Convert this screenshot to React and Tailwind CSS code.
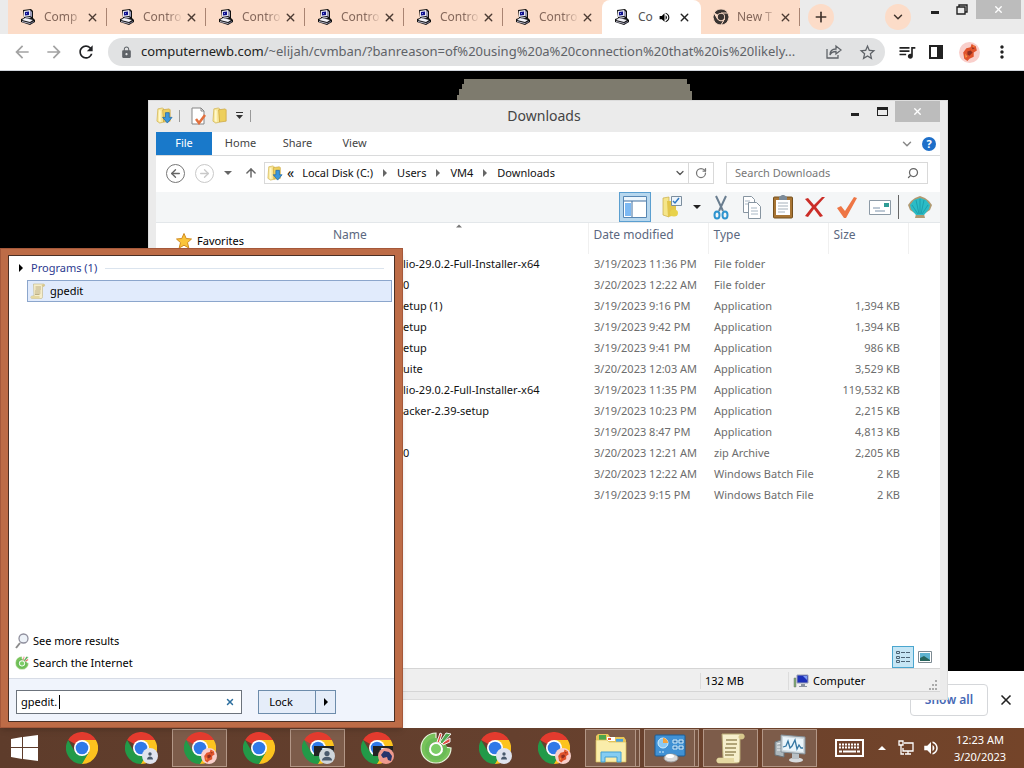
import { useId, useState } from 'react';
import { ArrowLeft, ArrowRight, ArrowUp, ChevronDown, Plus, RotateCw, Search, X } from 'lucide-react';
import { MdArrowBack, MdArrowForward, MdLock, MdMoreVert, MdQueueMusic, MdRefresh, MdStarBorder, MdVolumeUp } from 'react-icons/md';

const tabs = [
  { title: 'Comp' },
  { title: 'Contro' },
  { title: 'Contro' },
  { title: 'Contro' },
  { title: 'Contro' },
  { title: 'Contro', noLine: true },
  { title: 'Co', active: true },
  { title: 'New T', chrome: true },
];

const files = [
  { name: 'lio-29.0.2-Full-Installer-x64', date: '3/19/2023 11:36 PM', type: 'File folder', size: '' },
  { name: '0', date: '3/20/2023 12:22 AM', type: 'File folder', size: '' },
  { name: 'etup (1)', date: '3/19/2023 9:16 PM', type: 'Application', size: '1,394 KB' },
  { name: 'etup', date: '3/19/2023 9:42 PM', type: 'Application', size: '1,394 KB' },
  { name: 'etup', date: '3/19/2023 9:41 PM', type: 'Application', size: '986 KB' },
  { name: 'uite', date: '3/20/2023 12:03 AM', type: 'Application', size: '3,529 KB' },
  { name: 'lio-29.0.2-Full-Installer-x64', date: '3/19/2023 11:35 PM', type: 'Application', size: '119,532 KB' },
  { name: 'acker-2.39-setup', date: '3/19/2023 10:23 PM', type: 'Application', size: '2,215 KB' },
  { name: '', date: '3/19/2023 8:47 PM', type: 'Application', size: '4,813 KB' },
  { name: '0', date: '3/20/2023 12:21 AM', type: 'zip Archive', size: '2,205 KB' },
  { name: '', date: '3/20/2023 12:22 AM', type: 'Windows Batch File', size: '2 KB' },
  { name: '', date: '3/19/2023 9:15 PM', type: 'Windows Batch File', size: '2 KB' },
];

function PcIcon({ size = 16 }) {
  return (
    <svg width={size} height={size} viewBox="0 0 16 16" className="shrink-0">
      <path d="M3 1l8-1 2 2v7l2 2v2l-5 3-9-3v-3l3-1z" fill="#111" />
      <path d="M4 2l6-1v6L4 8z" fill="#e4e4ee" />
      <path d="M10 1l2 2v5l-2-1z" fill="#9a9ab8" />
      <path d="M5 3l4-.6v3.6L5 6.600z" fill="#10108c" />
      <path d="M6 4h1v1H6z" fill="#7a90f0" />
      <path d="M2 11l3-2 8 2-3 2z" fill="#f2f2fa" />
      <path d="M2 12l8 2v1l-8-2z" fill="#b8b8cc" />
      <path d="M10 14l4-2v1l-4 2z" fill="#77778f" />
      <path d="M5 8.600l5-.6 1 1-4 .5z" fill="#c6c6d8" />
    </svg>
  );
}

function ChromeLogo({ size = 32, className = '', mono = false }) {
  const red = mono ? '#3a3432' : '#e33b2e';
  const yellow = mono ? '#3a3432' : '#fcc31e';
  const green = mono ? '#3a3432' : '#229a48';
  const gap = mono ? '#fcdcc8' : 'none';
  return (
    <svg width={size} height={size} viewBox="0 0 48 48" className={className}>
      <path d="M24 24L3.200 12A24 24 0 0 1 44.800 12z" fill={red} stroke={gap} strokeWidth="3" />
      <path d="M24 24V12h20.800A24 24 0 0 1 24 48l-1 0 11.400-18z" fill={yellow} stroke={gap} strokeWidth="3" />
      <path d="M3.200 12l10.400 18 10.400 6 10.400-6L24 48A24 24 0 0 1 3.200 12z" fill={green} stroke={gap} strokeWidth="3" />
      <circle cx="24" cy="24" r="12" fill={mono ? '#fcdcc8' : '#fff'} />
      <circle cx="24" cy="24" r="9.500" fill={mono ? '#3a3432' : '#3079e8'} />
    </svg>
  );
}

function Phoenix({ size = 20 }) {
  return (
    <svg width={size} height={size} viewBox="0 0 20 20">
      <circle cx="10" cy="10" r="10" fill="#f9cfcb" />
      <path d="M5 16l-1-6 3-4 4-1 1-3 4 2 1 4-3 2v4l-4 2-2 2z" fill="#e0532c" />
      <path d="M8 9l3-1 2 2-3 3-2-1zM12 5l3 1-2 1z" fill="#8f2f20" />
      <path d="M6 11l2 3-2 1zM13 4l1-1 1 2z" fill="#f59743" />
    </svg>
  );
}

function PersonBadge({ size = 16, dark }) {
  return (
    <svg width={size} height={size} viewBox="0 0 16 16">
      <circle cx="8" cy="8" r="8" fill={dark ? '#cfd5da' : '#dfe3ee'} />
      <circle cx="8" cy={dark ? '5.500' : '6'} r={dark ? '2.600' : '1.700'} fill="#4a5a6c" />
      <path d={dark ? 'M3 12.500c0-5 10-5 10 0z' : 'M5 11.500c0-4 6-4 6 0z'} fill="#4a5a6c" />
    </svg>
  );
}

function HorseBadge() {
  return (
    <svg width="16" height="16" viewBox="0 0 16 16">
      <circle cx="8" cy="8" r="8" fill="#ee9a8e" />
      <path d="M3 7l3-4 5 1 3 4-1 5-3-1-1-3-4 1z" fill="#26356b" />
    </svg>
  );
}

function Folder({ size = 18, arrow }) {
  return (
    <svg width={size} height={size} viewBox="0 0 18 18" className="shrink-0">
      <path d="M2 2l5-1 1 1v14l-4 1-3-2z" fill="#f8e79a" stroke="#cfae45" strokeWidth=".7" />
      <path d="M7 3l7-1 1 1v12l-7 1z" fill="#edcf5c" stroke="#c8a139" strokeWidth=".7" />
      <path d="M3 3l2 1v12l-2-1z" fill="#fff8cc" />
      {arrow && <path d="M10 6h4v5h3l-5 6-5-6h3z" fill="#3b97dc" stroke="#1f68a8" strokeWidth=".8" />}
    </svg>
  );
}

function DocCheck() {
  return (
    <svg width="17" height="18" viewBox="0 0 17 18">
      <path d="M2 1h9l3 3v13H2z" fill="#fff" stroke="#858585" />
      <path d="M11 1v3h3" fill="none" stroke="#858585" />
      <path d="M6 12l3 4 6-8" fill="none" stroke="#e36f3c" strokeWidth="2.500" />
    </svg>
  );
}

function Triangle({ className = '', dir = 'down', size = 8 }) {
  const d = { down: 'M0 2h8l-4 4z', right: 'M2 0v8l4-4z', up: 'M0 6h8l-4-4z' }[dir];
  return (
    <svg width={size} height={size} viewBox="0 0 8 8" className={className} fill="currentColor">
      <path d={d} />
    </svg>
  );
}

function ScrollIcon({ size = 18 }) {
  return (
    <svg width={size} height={size} viewBox="0 0 30 32" className="shrink-0">
      <path d="M6 2h20c3 0 3 5 0 5h-2v20c0 3-1 4-3 4H3c-3 0-3-5 0-5h4z" fill="#f6eecb" stroke="#b7a873" />
      <path d="M24 3c-2 0-2 4 0 4h2c3 0 3-5 0-5z" fill="#d8c88c" />
      <path d="M3 26h15c0 3 0 5 3 5H3c-3 0-3-5 0-5z" fill="#e5d8a2" />
      <path d="M10 8h11M10 12h11M9 16h11M9 20h11M9 23h9" stroke="#9a8c5e" strokeWidth="1.300" />
    </svg>
  );
}

function CocCoc({ size = 32 }) {
  return (
    <svg width={size} height={size} viewBox="0 0 32 32" className="shrink-0">
      <path d="M16 1A15 15 0 1 0 31 16l-7-1a8 8 0 1 1-8-8z" fill="#78c35b" stroke="#e9f6df" strokeWidth="1.200" />
      <circle cx="16" cy="17" r="9" fill="none" stroke="#6abb57" strokeWidth="4" />
      <circle cx="16" cy="17" r="6" fill="#7ccd67" stroke="#fff" strokeWidth="2" />
      <path d="M17 10l3-9 2 1-3 9zM22 11l8-5v4l-7 3z" fill="#e04c45" stroke="#fff" strokeWidth=".9" />
      <path d="M20 10l6-9 5 1-9 10z" fill="#4fa950" stroke="#fff" strokeWidth=".9" />
    </svg>
  );
}

function ExplorerIcon() {
  return (
    <svg width="34" height="32" viewBox="0 0 34 32">
      <path d="M2 4l2-2h10l2 3h14l2 3v22H2z" fill="#e6c65a" />
      <path d="M5 3h7v5H5z" fill="#4ca64b" />
      <path d="M13 5h8v4h-8z" fill="#fff" />
      <path d="M14 6h3v2h-3z" fill="#e25b39" />
      <path d="M22 7h7v3h-7z" fill="#4aa3df" />
      <path d="M2 8h11l2 2h17v20H2z" fill="#faedaa" stroke="#d9bd59" strokeWidth=".7" />
      <path d="M7 20h20v10h-4v-5H11v5H7z" fill="#85cdf2" stroke="#459fd2" />
    </svg>
  );
}

function ControlPanelIcon() {
  return (
    <svg width="34" height="32" viewBox="0 0 34 32">
      <rect x="2" y="3" width="30" height="21" rx="1" fill="#4091d4" stroke="#1b5c96" />
      <circle cx="10" cy="11" r="5" fill="#8cc9f2" stroke="#d6effd" />
      <path d="M10 11V6a5 5 0 0 1 5 5z" fill="#f3a33d" />
      <path d="M20 8h4v3h-4zM26 8h4v3h-4zM20 14h4v3h-4zM26 14h4v3h-4z" fill="#2c75b5" stroke="#d6effd" />
      <path d="M6 20h6" stroke="#d6effd" strokeDasharray="2 1" />
      <ellipse cx="18" cy="26" rx="7" ry="4" fill="#d9d9d9" stroke="#999" />
      <ellipse cx="17" cy="24" rx="4" ry="2" fill="#fff" />
    </svg>
  );
}

function MonitorIcon() {
  return (
    <svg width="32" height="30" viewBox="0 0 32 30">
      <path d="M1 9l9-3v18l-9-2z" fill="#aeb8bd" stroke="#69757c" />
      <path d="M3 11l4-1M3 14h4M3 17h4" stroke="#eef2f4" />
      <ellipse cx="22" cy="27" rx="7" ry="2.500" fill="#d7dadd" />
      <path d="M18 20h7v6h-7z" fill="#b9c0c5" />
      <path d="M7 2l24 2v17L7 19z" fill="#cfd8dd" stroke="#84919a" />
      <path d="M9 4l20 2v13L9 17z" fill="#eaf5fb" />
      <path d="M9 14l3-1 2-5 2 7 2-2 3-6 2 9 2-4 2 3h2" fill="none" stroke="#3477a3" strokeWidth="1.300" />
    </svg>
  );
}

// Chrome tab strip and toolbar

function BrowserTab({ tab }) {
  const [closed, setClosed] = useState(false);
  if (closed) return null;

  if (tab.active) {
    return (
      <div className="h-full w-[99px] bg-[#fcdcc8]">
        <div className="flex h-full items-center rounded-t-lg bg-white pr-[10px] pl-3">
          <PcIcon />
          <span className="ml-2 w-4 text-xs whitespace-nowrap text-[#555]">{tab.title}</span>
          <MdVolumeUp size={13} className="ml-1 shrink-0 text-black" />
          <button aria-label="Close tab" onClick={() => setClosed(true)} className="ml-auto text-[#222]">
            <X size={13} strokeWidth={2.5} />
          </button>
        </div>
      </div>
    );
  }

  return (
    <div className="h-full w-[99px] bg-[#fcdcc8] py-2">
      <div className={`flex h-full items-center pl-3 ${tab.noLine ? '' : 'border-r border-[#a98472]'}`}>
        {tab.chrome ? <ChromeLogo size={16} mono className="shrink-0" /> : <PcIcon />}
        <span className="mr-[2px] ml-2 w-10 mask-r-from-60% text-xs whitespace-nowrap text-[#85685b]">{tab.title}</span>
        <button aria-label="Close tab" onClick={() => setClosed(true)} className="shrink-0 text-[#4b3a32]">
          <X size={13} strokeWidth={2.5} />
        </button>
      </div>
    </div>
  );
}

function BrowserHeader() {
  return (
    <header>
      <div className="flex h-[34px] items-center bg-[#ebebeb] pl-2">
        {tabs.map((tab, i) => (
          <BrowserTab key={i} tab={tab} />
        ))}
        <button aria-label="New tab" className="ml-2 flex size-[26px] items-center justify-center rounded-full bg-[#fcdcc8] text-[#40332c]">
          <Plus size={16} strokeWidth={2.5} />
        </button>
        <div className="ml-auto flex h-full items-start">
          <button aria-label="Search tabs" className="mt-1 mr-5 flex size-[26px] items-center justify-center rounded-full bg-[#fcdcc8] text-[#40332c]">
            <ChevronDown size={14} strokeWidth={2.5} />
          </button>
          <button aria-label="Minimize" className="mt-[11px] mr-[17px] h-[3px] w-2 bg-[#222]" />
          <button aria-label="Restore" className="mt-1 mr-2 text-[#222]">
            <svg width="12" height="11" viewBox="0 0 12 11" fill="none" stroke="currentColor" strokeWidth="1.400">
              <path d="M3 3V1h8v7H9M1 3h8v7H1z" />
            </svg>
          </button>
          <button aria-label="Close" className="mr-[3px] flex h-[19px] w-[45px] items-center justify-center bg-[#bcbcbc] text-white">
            <X size={11} strokeWidth={3} />
          </button>
        </div>
      </div>

      <div className="flex h-[37px] items-center border-b border-gray-300 bg-white pr-3 pl-3 text-[#5f6368]">
        <button aria-label="Back" className="mr-3 text-[#a3a3a3]"><MdArrowBack size={20} /></button>
        <button aria-label="Forward" className="mr-3 text-[#a3a3a3]"><MdArrowForward size={20} /></button>
        <button aria-label="Reload" className="mr-3 text-[#202124]"><MdRefresh size={20} /></button>
        <div className="flex h-7 min-w-0 flex-1 items-center rounded-full bg-[#e1e2e3] pr-2 pl-3">
          <MdLock size={13} className="mr-2 shrink-0" />
          <p className="min-w-0 flex-1 text-[13px] whitespace-nowrap">
            <span className="text-[#222]">computernewb.com</span>
            /~elijah/cvmban/?banreason=of%20using%20a%20connection%20that%20is%20likely...
          </p>
          <button aria-label="Share" className="mr-4 ml-2">
            <svg width="16" height="16" viewBox="0 0 16 16" fill="none" stroke="currentColor" strokeWidth="1.300">
              <path d="M1 5v9h11v-3M4 11c0-4 2-6 6-6V2l5 4-5 4V7.500C7 7.500 5 8.500 4 11z" />
            </svg>
          </button>
          <button aria-label="Bookmark"><MdStarBorder size={19} /></button>
        </div>
        <button aria-label="Media controls" className="ml-3 text-[#222]"><MdQueueMusic size={20} /></button>
        <button aria-label="Side panel" className="ml-3 h-[14px] w-[14px] border-2 border-r-[6px] border-[#222]" />
        <button aria-label="Profile" className="ml-4"><Phoenix size={21} /></button>
        <button aria-label="Menu" className="ml-3 text-[#222]"><MdMoreVert size={20} /></button>
      </div>
    </header>
  );
}

// File Explorer

function TitleBar() {
  return (
    <div className="grid h-[31px] grid-cols-3 items-center">
      <div className="flex items-center pb-[2px]">
        <Folder size={17} arrow />
        <span className="mx-[6px] h-3 w-px bg-[#999]" />
        <span className="mr-[5px] ml-1"><DocCheck /></span>
        <Folder size={17} />
        <svg width="9" height="9" viewBox="0 0 9 9" className="mx-[6px]"><path d="M1 1h7v1H1zM1 4h7L4.500 8z" fill="#333" /></svg>
        <span className="h-3 w-px bg-[#999]" />
      </div>
      <h1 className="pr-2 pb-[2px] text-center text-sm text-[#444]">Downloads</h1>
      <div className="flex h-full items-start justify-end">
        <button aria-label="Minimize window" className="mt-3 mr-[18px] h-[3px] w-2 bg-[#222]" />
        <button aria-label="Maximize window" className="mt-[6px] mr-[7px] h-[9px] w-[11px] border border-t-[3px] border-[#222]" />
        <button aria-label="Close window" className="flex h-[21px] w-[45px] items-center justify-center bg-[#bcbcbc] text-white">
          <X size={11} strokeWidth={3} />
        </button>
      </div>
    </div>
  );
}

function Ribbon() {
  return (
    <nav className="flex h-6 items-center border-b border-[#dadbdc] bg-white text-[11px] text-[#444]">
      <button className="h-full w-14 bg-[#1979ca] text-white">File</button>
      <button className="h-full w-[57px]">Home</button>
      <button className="h-full w-[57px]">Share</button>
      <button className="h-full w-[57px]">View</button>
      <div className="ml-auto flex items-center gap-2 pr-1">
        <button aria-label="Expand ribbon" className="text-[#888]"><ChevronDown size={14} strokeWidth={2.5} /></button>
        <button aria-label="Help" className="size-[14px] rounded-full bg-[#1e6fc9] text-[11px] leading-[14px] font-bold text-white">?</button>
      </div>
    </nav>
  );
}

function AddressRow() {
  const parts = ['Local Disk (C:)', 'Users', 'VM4', 'Downloads'];
  return (
    <div className="flex h-9 items-center bg-white pr-3 pb-[2px] pl-[10px]">
      <button aria-label="Back to previous folder" className="flex size-[19px] items-center justify-center rounded-full border border-[#777] text-[#666]">
        <ArrowLeft size={13} strokeWidth={2.5} />
      </button>
      <button aria-label="Forward to next folder" className="ml-[10px] flex size-[19px] items-center justify-center rounded-full border border-[#c9c9c9] text-[#c9c9c9]">
        <ArrowRight size={13} strokeWidth={2.5} />
      </button>
      <button aria-label="Recent locations" className="ml-[10px] text-[#666]"><Triangle size={8} /></button>
      <button aria-label="Up" className="ml-3 text-[#666]"><ArrowUp size={14} strokeWidth={2.5} /></button>
      <div className="ml-[6px] flex h-[22px] flex-1 items-center border border-[#d9d9d9] pl-[2px] text-[11px] text-[#111]">
        <Folder size={16} arrow />
        <span className="mr-2 ml-1 text-sm">«</span>
        {parts.map((part, i) => (
          <span key={part} className="flex items-center">
            <button className="whitespace-nowrap">{part}</button>
            {i < parts.length - 1 && <Triangle dir="right" size={8} className="mx-2 text-[#666]" />}
          </span>
        ))}
        <button aria-label="Previous locations" className="mr-[2px] ml-auto text-[#555]"><ChevronDown size={12} strokeWidth={2.5} /></button>
        <button aria-label="Refresh" className="flex h-full w-[25px] items-center justify-center border-l border-[#d9d9d9] text-[#777]">
          <RotateCw size={12} strokeWidth={2.5} />
        </button>
      </div>
      <label className="ml-3 flex h-[22px] w-[202px] items-center border border-[#d9d9d9] px-2">
        <input
          type="text"
          aria-label="Search Downloads"
          placeholder="Search Downloads"
          className="min-w-0 flex-1 text-[11px] outline-none placeholder:text-[#777]"
        />
        <Search size={12} strokeWidth={2.5} className="-scale-x-100 text-[#666]" />
      </label>
    </div>
  );
}

function CommandBar() {
  return (
    <div className="flex h-[31px] items-center justify-end border-b border-[#e3e7ea] bg-[#f4f6f7] pr-2">
      <button aria-label="Navigation pane" className="flex h-[30px] w-8 items-center justify-center border border-[#5b9fd0] bg-[#b7d7ee]">
        <svg width="24" height="22" viewBox="0 0 24 22">
          <path d="M.5.500h23v21H.5z" fill="#fff" stroke="#5887b3" />
          <path d="M1 1h22v4H1z" fill="#eef6fc" />
          <path d="M2 7h6v13H2z" fill="#7db9f3" />
          <path d="M1 5h22M9 5v16" stroke="#3f6fa0" />
        </svg>
      </button>
      <button aria-label="Select" className="ml-[10px]">
        <svg width="22" height="24" viewBox="0 0 22 24">
          <path d="M2 3l6-1v20l-6-2z" fill="#f5e58a" stroke="#c9ad49" strokeWidth=".7" />
          <path d="M6 6h9v14l-8 2z" fill="#e3c64b" />
          <ellipse cx="13" cy="18" rx="4" ry="3.500" fill="#e8d24b" />
          <path d="M10.500 1.500h10v9h-10z" fill="#eef5fb" stroke="#7c8e9e" />
          <path d="M12 6l2 2 4-5" fill="none" stroke="#2f77c1" strokeWidth="1.500" />
        </svg>
      </button>
      <button aria-label="Select options" className="ml-[10px] text-[#222]"><Triangle size={8} /></button>
      <button aria-label="Cut" className="ml-3">
        <svg width="16" height="25" viewBox="0 0 16 25" fill="none">
          <path d="M3 1l7 15M13 1L6 16" stroke="#6a7e90" strokeWidth="2" />
          <ellipse cx="4" cy="20" rx="2.500" ry="3.500" stroke="#2e94cf" strokeWidth="2" />
          <ellipse cx="12" cy="20" rx="2.500" ry="3.500" stroke="#2e94cf" strokeWidth="2" />
        </svg>
      </button>
      <button aria-label="Copy" className="ml-[14px]">
        <svg width="18" height="23" viewBox="0 0 18 23" fill="#fff" stroke="#8795a1">
          <path d="M.5.500h8l3 3v13H.5z" />
          <path d="M5.500 6.500h8l4 4v12h-12z" />
          <path d="M2 5h5M2 8h3M8 12h6M8 15h7M8 18h7" stroke="#a8b7c4" />
        </svg>
      </button>
      <button aria-label="Paste" className="ml-3">
        <svg width="20" height="24" viewBox="0 0 20 24">
          <rect x=".5" y="2" width="19" height="21" rx="1" fill="#a87534" stroke="#74501f" />
          <path d="M3 5h14v15H3z" fill="#fff" />
          <path d="M5 8h10M5 11h10M5 14h10M5 17h7" stroke="#a6b1bb" />
          <path d="M6 2l3-2h2l3 2v3H6z" fill="#7c8b99" />
        </svg>
      </button>
      <button aria-label="Delete" className="ml-3">
        <svg width="20" height="21" viewBox="0 0 20 21" fill="#cb2d27">
          <path d="M0 2l3-1 6 7 8-8 3 0-9 10 7 9-3 1-6-8-6 8-3-1 7-9z" />
        </svg>
      </button>
      <button aria-label="Properties" className="ml-3">
        <svg width="20" height="22" viewBox="0 0 20 22" fill="#ee7645">
          <path d="M0 12l4-2 4 5 9-14 3 1L9 22H7z" />
        </svg>
      </button>
      <button aria-label="Rename" className="ml-3">
        <svg width="22" height="15" viewBox="0 0 22 15">
          <path d="M.5.500h21v14H.5z" fill="#fff" stroke="#8c9aa6" />
          <path d="M15 3h5v4h-5z" fill="#2f9c95" />
          <path d="M4 8h7M6 11h10" stroke="#7d93ab" />
        </svg>
      </button>
      <span className="ml-[7px] h-6 w-px bg-[#666]" />
      <button aria-label="Shell" className="ml-[9px]">
        <svg width="24" height="22" viewBox="0 0 24 22">
          <path d="M7 22l1-4-6-4-2-5 3-4 4-3 5-2 5 2 4 3 3 4-2 5-6 4 1 4z" fill="#b09a72" />
          <path d="M8 19l-5-6-1-4 4-5 6-2 6 2 4 5-1 4-5 6z" fill="#2bbcc6" />
          <path d="M10 18L4 9M11 18L8 4M12 18V3M13 18l3-14M14 18l6-9" stroke="#1594a2" strokeWidth=".7" />
        </svg>
      </button>
    </div>
  );
}

function FileTable() {
  return (
    <table className="w-full table-fixed border-collapse text-[11px] text-[#6d6d6d]">
      <thead>
        <tr className="h-[31px] text-left align-top text-xs text-[#5b6880]">
          <th className="relative pt-1 pl-2 font-normal">
            Name
            <Triangle dir="up" size={6} className="absolute top-0 left-1/2 text-[#777]" />
          </th>
          <th className="w-[120px] border-l border-[#f0f0f0] pt-1 pl-[5px] font-normal">Date modified</th>
          <th className="w-[120px] border-l border-[#f0f0f0] pt-1 pl-[5px] font-normal">Type</th>
          <th className="w-20 border-x border-[#f0f0f0] pt-1 pl-[5px] font-normal">Size</th>
          <th className="w-8" />
        </tr>
      </thead>
      <tbody>
        {files.map((file, i) => (
          <tr key={i} className="h-[21px] whitespace-nowrap">
            <td className="pl-[78px] text-[#111]">{file.name}</td>
            <td className="pl-[6px]">{file.date}</td>
            <td className="pl-[6px]">{file.type}</td>
            <td className="pr-2 text-right">{file.size}</td>
            <td />
          </tr>
        ))}
      </tbody>
    </table>
  );
}

function Explorer() {
  return (
    <section className="absolute top-[29px] left-[148px] flex h-[600px] w-[800px] flex-col border border-[#dcdcdc] bg-[#ebebeb] px-[7px] pb-[7px]">
      <TitleBar />
      <Ribbon />
      <AddressRow />
      <CommandBar />
      <div className="flex min-h-0 flex-1 bg-white">
        <aside className="w-[169px] pt-[10px] pl-5 text-[11px] text-black">
          <button className="flex items-center gap-[5px]">
            <svg width="16" height="16" viewBox="0 0 16 16">
              <path d="M8 .5l2.200 5 5.300.500-4 3.600 1.300 5.400L8 12.200 3.200 15l1.300-5.400L.5 6l5.300-.5z" fill="#fac43a" stroke="#d08a20" />
            </svg>
            Favorites
          </button>
        </aside>
        <div className="flex min-w-0 flex-1 flex-col justify-between">
          <FileTable />
          <div className="flex items-center justify-end gap-1 pr-2">
            <button aria-label="Details view" className="flex size-[22px] items-center justify-center border border-[#4aa6cf] bg-[#c6e6f5]">
              <svg width="16" height="14" viewBox="0 0 16 14" fill="none" stroke="#4c6475">
                <path d="M1.500 1.500h3v2h-3zM1.500 6.500h3v2h-3zM1.500 10.500h3v2h-3z" />
                <path d="M6 2.500h9M6 7.500h9M6 11.500h9" strokeDasharray="4 1" />
              </svg>
            </button>
            <button aria-label="Thumbnail view">
              <svg width="14" height="12" viewBox="0 0 14 12">
                <path d="M.5.500h13v11H.5z" fill="#fff" stroke="#7d8a92" />
                <path d="M2 2h10v8H2z" fill="#5fb3cf" />
                <path d="M2 7l4-2 6 4v1H2z" fill="#27655c" />
              </svg>
            </button>
          </div>
        </div>
      </div>
      <footer className="flex h-6 items-center justify-end border-y border-[#d5d5d5] bg-[#efefef] pt-[2px] text-[11px] text-black">
        <span className="w-[88px] border-l border-[#dcdcdc] pl-1">132 MB</span>
        <span className="flex w-[152px] items-center gap-1 border-l border-[#dcdcdc] pl-1">
          <svg width="16" height="14" viewBox="0 0 16 14">
            <path d="M1 4h2v9H1z" fill="#7fae72" stroke="#777" strokeWidth=".5" />
            <path d="M4 1h11v8H4z" fill="#1c2fb8" stroke="#9aa0b4" />
            <path d="M10 2h4v4z" fill="#7d9bf5" />
            <path d="M8 10h4v2h2v1H6v-1h2z" fill="#8b93a0" />
          </svg>
          Computer
          <svg width="10" height="10" viewBox="0 0 10 10" className="mt-2 mr-[2px] ml-auto" fill="#aaa">
            <path d="M7 0h2v2H7zM7 4h2v2H7zM4 4h2v2H4zM7 8h2v2H7zM4 8h2v2H4zM1 8h2v2H1z" />
          </svg>
        </span>
      </footer>
    </section>
  );
}

// Start menu search results

function StartMenu() {
  const [query, setQuery] = useState('gpedit.');
  const searchId = useId();
  return (
    <section className="absolute bottom-0 left-0 flex h-[480px] w-[403px] flex-col border border-[#a5583a] bg-[#bd6c47] px-[7px] pt-[6px] pb-[5px] shadow-md">
      <div className="flex min-h-0 flex-1 flex-col border border-[#4a2f24] bg-white text-[11px] text-black">
        <div className="flex-1 px-[2px] pt-[2px]">
          <div className="flex h-5 items-center pr-2 pl-[6px] text-[#2b3990]">
            <Triangle dir="right" size={8} className="mr-[6px] text-black" />
            Programs (1)
            <span className="ml-2 h-px flex-1 bg-[#dbe4ee]" />
          </div>
          <button className="mt-[2px] ml-4 flex h-[22px] w-[365px] items-center gap-1 border border-[#8ca6cc] bg-[#e1ebfc] pl-[2px]">
            <ScrollIcon size={16} />
            gpedit
          </button>
        </div>
        <div className="flex flex-col items-start border-b border-[#d7dce6] pb-1 pl-[6px]">
          <button className="flex h-[22px] items-center gap-1">
            <svg width="14" height="16" viewBox="0 0 14 16" fill="none">
              <path d="M1 15l4-5" stroke="#8b8b8b" strokeWidth="2" />
              <circle cx="8.500" cy="5.500" r="4.500" fill="#edf2f8" stroke="#8f8f9d" strokeWidth="1.300" />
            </svg>
            See more results
          </button>
          <button className="flex h-[22px] items-center gap-1">
            <CocCoc size={14} />
            Search the Internet
          </button>
        </div>
        <div className="flex h-[42px] items-center bg-[#f0f4fc] pt-1 pl-[7px]">
          <div className="relative flex h-6 w-[226px] items-center border border-[#6c737c] bg-white pr-[6px] pl-1">
            <label htmlFor={searchId} className="sr-only">Search programs and files</label>
            <input
              id={searchId}
              type="text"
              value={query}
              onChange={(e) => setQuery(e.target.value)}
              className="min-w-0 flex-1 outline-none"
            />
            <span className="absolute left-[42px] h-[14px] w-px bg-black" />
            <button aria-label="Clear" onClick={() => setQuery('')} className="text-[#2c6e9e]"><X size={10} strokeWidth={3.5} /></button>
          </div>
          <div className="ml-4 flex h-6 border border-[#6d8cab] bg-[#e5edf9]">
            <button className="w-14 pr-3">Lock</button>
            <button aria-label="Power options" className="flex w-5 items-center justify-center border-l border-[#6d8cab]">
              <Triangle dir="right" size={8} />
            </button>
          </div>
        </div>
      </div>
    </section>
  );
}

// Taskbar

function ChromeTask({ badge, mail }) {
  return (
    <span className="relative">
      <ChromeLogo size={32} />
      {mail && <span className="absolute top-[14px] left-3 h-[10px] w-5 bg-[#222] pl-[2px] text-[9px] leading-[10px] font-bold text-white">B</span>}
      {badge && <span className="absolute -right-px bottom-0">{badge}</span>}
    </span>
  );
}

const tasks = [
  { label: 'Chrome', icon: <ChromeTask /> },
  { label: 'Chrome guest', icon: <ChromeTask badge={<PersonBadge />} /> },
  { label: 'Chrome phoenix', icon: <ChromeTask badge={<Phoenix size={16} />} />, open: true },
  { label: 'Chrome window', icon: <ChromeTask /> },
  { label: 'Chrome profile', icon: <ChromeTask mail badge={<PersonBadge dark />} />, open: true },
  { label: 'Chrome horse', icon: <ChromeTask mail badge={<HorseBadge />} /> },
  { label: 'Coc Coc', icon: <CocCoc size={32} /> },
  { label: 'Chrome person', icon: <ChromeTask badge={<PersonBadge />} /> },
  { label: 'Chrome bird', icon: <ChromeTask badge={<Phoenix size={16} />} /> },
  { label: 'File Explorer', icon: <ExplorerIcon />, open: true, stacked: true },
  { label: 'Control Panel', icon: <ControlPanelIcon />, open: true, stacked: true },
  { label: 'Script', icon: <ScrollIcon size={32} />, open: true },
  { label: 'Task Manager', icon: <MonitorIcon />, open: true },
];

function Taskbar() {
  return (
    <footer className="flex h-10 items-center bg-linear-to-r from-[#5e3c2b] via-[#65402e] to-[#744429] text-white">
      <button aria-label="Start" className="mr-[6px] ml-[11px]">
        <svg width="27" height="26" viewBox="0 0 27 26" fill="#fff">
          <path d="M0 4l11-2v10H0zM12 2l15-2v12H12zM0 13h11v11L0 22zM12 13h15v13l-15-2z" />
        </svg>
      </button>
      <div className="flex h-full items-center gap-1 py-px pl-[10px]">
        {tasks.map((task) => (
          <button
            key={task.label}
            aria-label={task.label}
            className={`flex h-full w-[55px] ${task.open && !task.stacked ? 'border border-[#b39787] bg-[#7d5c4a]' : ''}`}
          >
            <span
              className={`flex h-full flex-1 items-center justify-center ${task.stacked ? 'border border-[#b39787] bg-[#7d5c4a]' : ''}`}
            >
              {task.icon}
            </span>
            {task.stacked && <span className="h-full w-1 border-y border-r border-[#b39787] bg-[#73513f]" />}
          </button>
        ))}
      </div>
      <div className="ml-auto flex items-center">
        <button aria-label="Touch keyboard">
          <svg width="29" height="18" viewBox="0 0 29 18">
            <path d="M1 1h27v16H1z" fill="none" stroke="#fff" strokeWidth="2" />
            <path d="M4 5.500h21M4 8.500h21" stroke="#fff" strokeWidth="2" strokeDasharray="2 1" />
            <path d="M4 12.500h3M8 12.500h13M22 12.500h3" stroke="#fff" strokeWidth="2" />
          </svg>
        </button>
        <button aria-label="Show hidden icons" className="ml-[14px]"><Triangle dir="up" size={8} /></button>
        <button aria-label="Network" className="ml-3">
          <svg width="17" height="16" viewBox="0 0 17 16" fill="none" stroke="#fff" strokeWidth="1.300">
            <path d="M6 3h9v8H5V8M10 11v3M7 14h6M1 1h4v4H1zM3 5v9h3" />
          </svg>
        </button>
        <button aria-label="Volume" className="ml-[7px]"><MdVolumeUp size={18} /></button>
        <time className="mr-4 ml-3 w-[56px] text-center text-[11px] leading-[17px] whitespace-nowrap">
          12:23 AM<br />3/20/2023
        </time>
      </div>
    </footer>
  );
}

export default function App() {
  return (
    <div className="flex min-h-screen flex-col overflow-hidden bg-black font-['Noto_Sans',sans-serif]">
      <BrowserHeader />
      <main className="relative flex min-h-[657px] flex-1 flex-col justify-end bg-black">
        <svg width="236" height="22" viewBox="0 0 236 22" className="absolute top-2 left-[457px]" fill="#7e7b6e">
          <path d="M7 0h223v5h3v7h2v10H0v-6h2v-6h3V5h2z" />
        </svg>
        <div className="flex h-[57px] items-center justify-end bg-white pr-[10px]">
          <button className="h-8 w-[78px] rounded border border-[#d5d7da] text-xs font-semibold text-[#4668b5]">Show all</button>
          <button aria-label="Close downloads" className="ml-[10px] text-[#222]"><X size={16} strokeWidth={2.5} /></button>
        </div>
        <Explorer />
        <StartMenu />
      </main>
      <Taskbar />
    </div>
  );
}
